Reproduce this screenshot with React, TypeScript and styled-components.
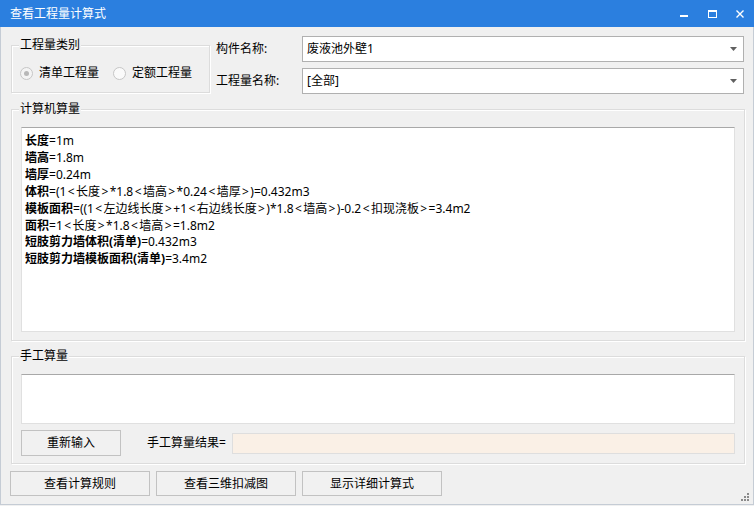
import styled, { createGlobalStyle } from 'styled-components';

const GlobalStyle = createGlobalStyle`
	html, body {
		margin: 0;
		padding: 0;
		background: #f0f0f0;
	}
	body {
		font-family: "Noto Sans", "Noto Sans CJK SC", sans-serif;
		font-size: 12px;
		color: #000;
	}
	* {
		box-sizing: border-box;
	}
`;

const Window = styled.div`
	position: relative;
	width: 754px;
	height: 505px;
	display: flex;
	flex-direction: column;
	background: #f0f0f0;
`;

const TitleBar = styled.div`
	height: 27px;
	flex: none;
	display: flex;
	align-items: center;
	justify-content: space-between;
	padding-left: 10px;
	background: #2b7fdf;
	color: #fff;
	font-size: 12px;
	line-height: 16px;
`;

const TitleButtons = styled.div`
	display: flex;
	height: 100%;
`;

const TitleButton = styled.div`
	width: 28px;
	height: 100%;
	display: flex;
	align-items: center;
	justify-content: center;
`;

const Body = styled.div`
	flex: 1;
	display: flex;
	flex-direction: column;
	padding: 9px 8px 0 9px;
	border: 1px solid #c5ccd5;
	border-top: none;
`;

const TopRow = styled.div`
	display: flex;
	align-items: flex-start;
	height: 58px;
`;

const Group = styled.div<{ $height: number; $top?: number }>`
	position: relative;
	height: ${(p) => p.$height}px;
	margin-top: ${(p) => p.$top ?? 0}px;
	margin-left: 1px;
	border: 1px solid #dcdcdc;
	box-shadow: inset 1px 1px 0 #fff, 1px 1px 0 #fff;
	display: flex;
	flex-direction: column;
`;

const TypeGroup = styled(Group)`
	width: 199px;
	flex: none;
`;

const WideGroup = styled(Group)`
	padding: 17px 9px 0 9px;
`;

const Legend = styled.span`
	position: absolute;
	top: -9px;
	left: 7px;
	padding: 0 1px;
	line-height: 16px;
	background: #f0f0f0;
`;

const RadioRow = styled.div`
	display: flex;
	align-items: center;
	padding: 19px 0 0 8px;
	line-height: 16px;
`;

const RadioItem = styled.label`
	display: flex;
	align-items: center;
	gap: 6px;
	margin-right: 14px;
`;

const RadioCircle = styled.span<{ $checked?: boolean }>`
	position: relative;
	width: 13px;
	height: 13px;
	border-radius: 50%;
	border: 1px solid #c6c6c6;
	background: ${(p) => (p.$checked ? '#f4f4f4' : '#fafafa')};

	&::after {
		content: '';
		display: ${(p) => (p.$checked ? 'block' : 'none')};
		position: absolute;
		left: 3px;
		top: 3px;
		width: 5px;
		height: 5px;
		border-radius: 50%;
		background: #b8b8b8;
	}
`;

const Fields = styled.div`
	margin-left: 6px;
	display: grid;
	grid-template-columns: 86px 442px;
	grid-auto-rows: 26px;
	row-gap: 6px;
`;

const FieldLabel = styled.div`
	align-self: center;
	line-height: 16px;
`;

const Combo = styled.div`
	display: flex;
	align-items: center;
	justify-content: space-between;
	padding: 0 6px 0 4px;
	background: #fff;
	border: 1px solid #b0b0b0;
	line-height: 16px;
`;

const TextBox = styled.div<{ $height: number }>`
	height: ${(p) => p.$height}px;
	flex: none;
	background: #fff;
	border: 1px solid #e0e0e0;
	border-top-color: #a8a8a8;
	padding: 5px 0 0 3px;
`;

const Line = styled.div`
	line-height: 16.9px;
	white-space: nowrap;
`;

const Key = styled.b`
	font-weight: 700;
`;

const Angle = styled.span`
	margin: 0 1.4px;
`;

const ManualRow = styled.div`
	display: flex;
	align-items: center;
	margin-top: 6px;
`;

const Button = styled.div<{ $width: number; $height: number }>`
	width: ${(p) => p.$width}px;
	height: ${(p) => p.$height}px;
	flex: none;
	display: flex;
	align-items: center;
	justify-content: center;
	border: 1px solid #c2c2c2;
	background: #f1f1f1;
	line-height: 16px;
`;

const ResultLabel = styled.span`
	margin-left: 26px;
	line-height: 16px;
`;

const ResultField = styled.div`
	flex: 1;
	height: 21px;
	margin-left: 6px;
	background: #faf0e6;
	border: 1px solid #dedede;
`;

const ButtonBar = styled.div`
	display: flex;
	gap: 6px;
	margin-top: 7px;
`;

const Grip = styled.svg`
	position: absolute;
	right: 5px;
	bottom: 4px;
`;

const lines: [string, string][] = [
	['长度', '=1m'],
	['墙高', '=1.8m'],
	['墙厚', '=0.24m'],
	['体积', '=(1<长度>*1.8<墙高>*0.24<墙厚>)=0.432m3'],
	['模板面积', '=((1<左边线长度>+1<右边线长度>)*1.8<墙高>)-0.2<扣现浇板>=3.4m2'],
	['面积', '=1<长度>*1.8<墙高>=1.8m2'],
	['短肢剪力墙体积(清单)', '=0.432m3'],
	['短肢剪力墙模板面积(清单)', '=3.4m2']
];

// the dialog font draws < and > with extra room on both sides
function Formula({ text }: { text: string }) {
	return (
		<>
			{text.split(/([<>])/).map((part, i) =>
				part === '<' || part === '>' ? <Angle key={i}>{part}</Angle> : part
			)}
		</>
	);
}

function Arrow() {
	return (
		<svg width="7" height="4" viewBox="0 0 7 4">
			<polygon points="0,0 7,0 3.5,4" fill="#606060" />
		</svg>
	);
}

export default function App() {
	return (
		<>
			<GlobalStyle />
			<Window>
				<TitleBar>
					<span>查看工程量计算式</span>
					<TitleButtons>
						<TitleButton>
							<svg width="8" height="8" viewBox="0 0 8 8">
								<rect x="0" y="5" width="8" height="2" fill="#fff" />
							</svg>
						</TitleButton>
						<TitleButton>
							<svg width="9" height="8" viewBox="0 0 9 8">
								<rect x="0.5" y="1" width="8" height="6.5" fill="none" stroke="#fff" />
								<rect x="0" y="0" width="9" height="2" fill="#fff" />
							</svg>
						</TitleButton>
						<TitleButton>
							<svg width="8" height="8" viewBox="0 0 8 8">
								<path d="M0.5 0.5 L7.5 7.5 M7.5 0.5 L0.5 7.5" stroke="#fff" strokeWidth="1.4" />
							</svg>
						</TitleButton>
					</TitleButtons>
				</TitleBar>
				<Body>
					<TopRow>
						<TypeGroup $height={48} $top={9}>
							<Legend>工程量类别</Legend>
							<RadioRow>
								<RadioItem>
									<RadioCircle $checked />
									清单工程量
								</RadioItem>
								<RadioItem>
									<RadioCircle />
									定额工程量
								</RadioItem>
							</RadioRow>
						</TypeGroup>
						<Fields>
							<FieldLabel>构件名称:</FieldLabel>
							<Combo>
								<span>废液池外壁1</span>
								<Arrow />
							</Combo>
							<FieldLabel>工程量名称:</FieldLabel>
							<Combo>
								<span>[全部]</span>
								<Arrow />
							</Combo>
						</Fields>
					</TopRow>

					<WideGroup $height={232} $top={15}>
						<Legend>计算机算量</Legend>
						<TextBox $height={205}>
							{lines.map(([k, v]) => (
								<Line key={k}>
									<Key>{k}</Key>
									<Formula text={v} />
								</Line>
							))}
						</TextBox>
					</WideGroup>

					<WideGroup $height={108} $top={15}>
						<Legend>手工算量</Legend>
						<TextBox $height={50} />
						<ManualRow>
							<Button $width={100} $height={26}>
								重新输入
							</Button>
							<ResultLabel>手工算量结果=</ResultLabel>
							<ResultField />
						</ManualRow>
					</WideGroup>

					<ButtonBar>
						<Button $width={140} $height={25}>
							查看计算规则
						</Button>
						<Button $width={140} $height={25}>
							查看三维扣减图
						</Button>
						<Button $width={140} $height={25}>
							显示详细计算式
						</Button>
					</ButtonBar>
				</Body>
				<Grip width="8" height="8" viewBox="0 0 8 8">
					<rect x="6" y="0" width="2" height="2" fill="#8a8a8a" />
					<rect x="3" y="3" width="2" height="2" fill="#8a8a8a" />
					<rect x="6" y="3" width="2" height="2" fill="#8a8a8a" />
					<rect x="0" y="6" width="2" height="2" fill="#8a8a8a" />
					<rect x="3" y="6" width="2" height="2" fill="#8a8a8a" />
					<rect x="6" y="6" width="2" height="2" fill="#8a8a8a" />
				</Grip>
			</Window>
		</>
	);
}
